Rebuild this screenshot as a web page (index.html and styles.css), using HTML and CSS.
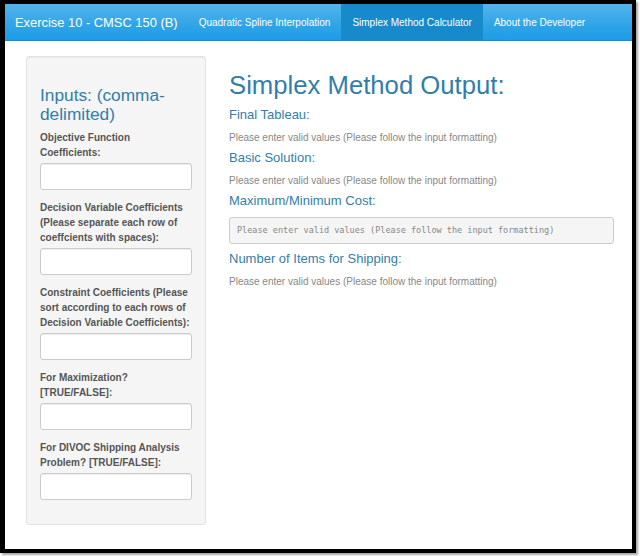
FILE: index.html
```html
<!DOCTYPE html>
<html lang="en">
<head>
<meta charset="utf-8">
<title>Simplex Method Calculator</title>
<link rel="stylesheet" href="styles.css">
</head>
<body>
<div class="frame">
  <nav class="navbar">
    <span class="brand">Exercise 10 - CMSC 150 (B)</span>
    <ul class="nav">
      <li class="nav-item">Quadratic Spline Interpolation</li>
      <li class="nav-item active">Simplex Method Calculator</li>
      <li class="nav-item">About the Developer</li>
    </ul>
  </nav>
  <div class="page">
    <aside class="well">
      <h3 class="well-title">Inputs: (comma-delimited)</h3>
      <div class="form-group">
        <label class="label">Objective Function Coefficients:</label>
        <input class="input" type="text">
      </div>
      <div class="form-group">
        <label class="label">Decision Variable Coefficients (Please separate each row of coeffcients with spaces):</label>
        <input class="input" type="text">
      </div>
      <div class="form-group">
        <label class="label">Constraint Coefficients (Please sort according to each rows of Decision Variable Coefficients):</label>
        <input class="input" type="text">
      </div>
      <div class="form-group">
        <label class="label">For Maximization? [TRUE/FALSE]:</label>
        <input class="input" type="text">
      </div>
      <div class="form-group">
        <label class="label">For DIVOC Shipping Analysis Problem? [TRUE/FALSE]:</label>
        <input class="input" type="text">
      </div>
    </aside>
    <main class="main">
      <h2 class="main-title">Simplex Method Output:</h2>
      <h4 class="sub">Final Tableau:</h4>
      <div class="msg">Please enter valid values (Please follow the input formatting)</div>
      <h4 class="sub">Basic Solution:</h4>
      <div class="msg">Please enter valid values (Please follow the input formatting)</div>
      <h4 class="sub">Maximum/Minimum Cost:</h4>
      <pre class="pre">Please enter valid values (Please follow the input formatting)</pre>
      <h4 class="sub sub-last">Number of Items for Shipping:</h4>
      <div class="msg">Please enter valid values (Please follow the input formatting)</div>
    </main>
  </div>
</div>
</body>
</html>
```
FILE: styles.css
```css
* { box-sizing: border-box; }
html, body { margin: 0; padding: 0; background: #fff; }
body {
  font-family: "Liberation Sans", Arial, sans-serif;
  font-size: 10px;
  line-height: 15px;
  color: #555;
  width: 640px;
  height: 556px;
  overflow: hidden;
}
.frame {
  width: 636px;
  height: 553px;
  border-style: solid;
  border-color: #000;
  border-width: 4px 4px 4px 5px;
  box-shadow: 2px 2px 2px rgba(0,0,0,0.35);
  overflow: hidden;
  background: #fff;
}
.navbar {
  display: flex;
  align-items: stretch;
  height: 37px;
  background: linear-gradient(#54b4eb, #2fa4e7 60%, #1d9ce5);
  border-bottom: 1px solid #178acc;
}
.brand {
  display: flex;
  align-items: center;
  padding: 1px 10px 0;
  font-size: 12.9px;
  color: #fff;
}
.nav {
  display: flex;
  list-style: none;
  margin: 0;
  padding: 0;
}
.nav-item {
  display: flex;
  align-items: center;
  padding: 1px 11px 0;
  color: #fff;
  font-size: 10px;
}
.nav-item.active { background: #178acc; }
.page {
  display: flex;
  align-items: flex-start;
  padding: 15px 0 0 21px;
  gap: 23px;
}
.well {
  width: 180px;
  background: #f5f5f5;
  border: 1px solid #e3e3e3;
  border-radius: 3px;
  box-shadow: inset 0 1px 1px rgba(0,0,0,0.05);
  padding: 14px 13px;
}
.well-title {
  margin: 15px 0 6px;
  font-size: 17.3px;
  font-weight: 400;
  line-height: 19px;
  color: #317eac;
}
.form-group { margin-bottom: 10px; }
.label {
  display: block;
  font-weight: 700;
  margin-bottom: 3px;
}
.input {
  display: block;
  width: 100%;
  height: 27px;
  border: 1px solid #ccc;
  border-radius: 3px;
  background: #fff;
  box-shadow: inset 0 1px 1px rgba(0,0,0,0.075);
  margin: 0;
}
.main {
  width: 385px;
}
.main-title {
  margin: 14.5px 0 9px;
  font-size: 25.7px;
  font-weight: 400;
  line-height: 1.1;
  color: #317eac;
}
.sub {
  margin: 6px 0 8px;
  font-size: 13px;
  font-weight: 400;
  line-height: 14.3px;
  color: #317eac;
}
.sub-last { margin-top: 8px; }
.msg {
  color: #888;
  margin-bottom: 6px;
}
.pre {
  margin: 0 0 7px;
  padding: 6px 7px;
  font-family: "DejaVu Sans Mono", "Liberation Mono", monospace;
  font-size: 8.5px;
  line-height: 13px;
  color: #888;
  background: #f5f5f5;
  border: 1px solid #ccc;
  border-radius: 3px;
}
```
